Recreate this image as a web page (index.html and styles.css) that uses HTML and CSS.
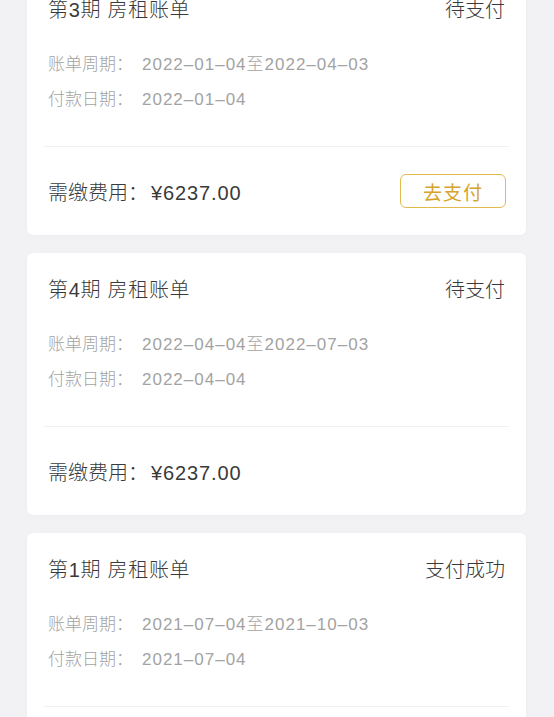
FILE: index.html
```html
<!DOCTYPE html>
<html lang="zh-CN">
<head>
    <meta charset="UTF-8">
    <meta name="viewport" content="width=device-width, initial-scale=1.0">
    <title>房租账单</title>
    <link rel="stylesheet" href="styles.css">
</head>
<body>
    <!-- 账单列表 -->
    <div class="bill-list">
        <div class="bill-card">
            <div class="bill-head">
                <span class="bill-title">第3期 房租账单</span>
                <span class="bill-status">待支付</span>
            </div>
            <div class="bill-info">
                <div class="info-row"><span class="info-label">账单周期：</span><span class="info-value">2022–01–04至2022–04–03</span></div>
                <div class="info-row"><span class="info-label">付款日期：</span><span class="info-value">2022–01–04</span></div>
            </div>
            <div class="bill-foot">
                <span class="bill-amount">需缴费用：<span class="num">¥6237.00</span></span>
                <button class="pay-btn">去支付</button>
            </div>
        </div>

        <div class="bill-card">
            <div class="bill-head">
                <span class="bill-title">第4期 房租账单</span>
                <span class="bill-status">待支付</span>
            </div>
            <div class="bill-info">
                <div class="info-row"><span class="info-label">账单周期：</span><span class="info-value">2022–04–04至2022–07–03</span></div>
                <div class="info-row"><span class="info-label">付款日期：</span><span class="info-value">2022–04–04</span></div>
            </div>
            <div class="bill-foot">
                <span class="bill-amount">需缴费用：<span class="num">¥6237.00</span></span>
            </div>
        </div>

        <div class="bill-card">
            <div class="bill-head">
                <span class="bill-title">第1期 房租账单</span>
                <span class="bill-status">支付成功</span>
            </div>
            <div class="bill-info">
                <div class="info-row"><span class="info-label">账单周期：</span><span class="info-value">2021–07–04至2021–10–03</span></div>
                <div class="info-row"><span class="info-label">付款日期：</span><span class="info-value">2021–07–04</span></div>
            </div>
        </div>
    </div>
</body>
</html>
```

FILE: styles.css
```css
body {
    margin: 0;
    padding: 0;
    background-color: #f2f2f4;
    font-family: "Liberation Sans", "Noto Sans CJK SC", sans-serif;
    font-weight: 300;
    color: #3a3a3a;
    height: 717px;
    overflow: hidden;
}
.bill-list {
    display: flex;
    flex-direction: column;
    gap: 18px;
    margin-top: -27px;
    padding: 0 28px 0 27px;
}
.bill-card {
    background-color: #fff;
    border-radius: 6px;
    padding: 0 17px;
    box-shadow: 0 1px 4px rgba(0, 0, 0, 0.03);
}
.bill-card:last-child {
    padding-bottom: 60px;
}
.bill-head {
    display: flex;
    justify-content: space-between;
    align-items: center;
    padding: 23px 4px 0 4px;
    height: 28px;
    font-size: 20px;
    line-height: 28px;
}
.bill-title {
    letter-spacing: 0.7px;
}
.bill-info {
    padding: 23px 4px 29px 4px;
    border-bottom: 1px solid #f0f0f0;
    font-size: 17px;
    line-height: 35px;
    color: #a3a3a3;
}
.info-label {
    display: inline-block;
    width: 94px;
}
.info-value {
    letter-spacing: 1px;
}
.bill-foot {
    display: flex;
    justify-content: space-between;
    align-items: center;
    height: 88px;
    padding: 0 3px 0 4px;
    font-size: 20px;
}
.bill-amount .num {
    margin-left: 3px;
    letter-spacing: 0.9px;
}
.pay-btn {
    width: 106px;
    height: 34px;
    border: 1.5px solid #e3ba4c;
    border-radius: 6px;
    background-color: #fff;
    color: #d6a42a;
    font-family: "Noto Sans CJK SC", sans-serif;
    font-weight: 400;
    font-size: 19px;
    letter-spacing: 1px;
    padding: 0;
}
```
